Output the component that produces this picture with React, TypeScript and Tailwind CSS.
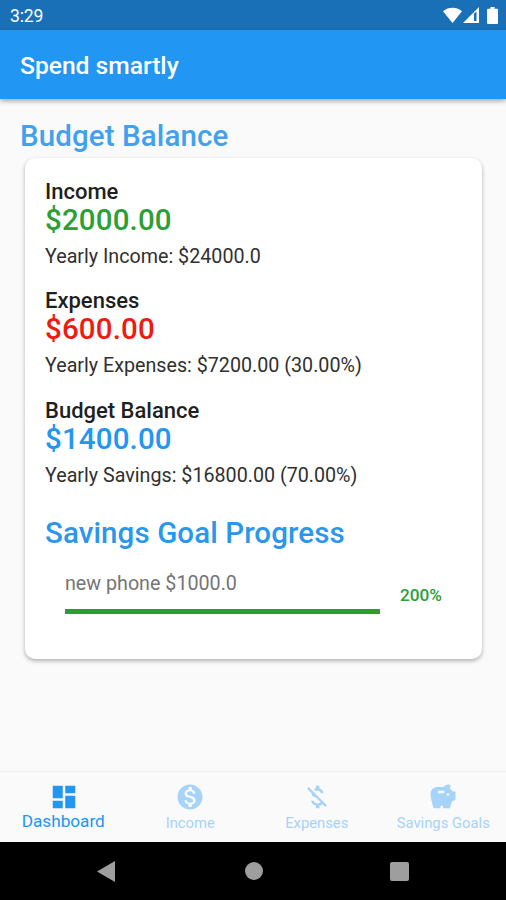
import {
  MdDashboard,
  MdMoneyOff,
  MdMonetizationOn,
  MdSavings,
} from "react-icons/md";

const summaries = [
  {
    title: "Income",
    amount: "$2000.00",
    yearly: "Yearly Income: $24000.0",
    color: "text-[#2ba036]",
  },
  {
    title: "Expenses",
    amount: "$600.00",
    yearly: "Yearly Expenses: $7200.00 (30.00%)",
    color: "text-[#f01a10]",
  },
  {
    title: "Budget Balance",
    amount: "$1400.00",
    yearly: "Yearly Savings: $16800.00 (70.00%)",
    color: "text-[#2196f3]",
  },
];

const tabs = [
  { label: "Income", Icon: MdMonetizationOn },
  { label: "Expenses", Icon: MdMoneyOff },
  { label: "Savings Goals", Icon: MdSavings },
];

const StatusBar = () => {
  return (
    <div className="h-[30px] shrink-0 bg-[#1a70b7] flex items-center justify-between pl-[10px] pr-[8px] text-white">
      <span className="text-[17.6px] leading-[30px] pt-[2px] tracking-[-0.2px]">
        3:29
      </span>
      <div className="flex items-center">
        <svg width="19" height="17" viewBox="0 0 19 17">
          <path d="M0 4.2C5.5-.4 13.5-.4 19 4.2L9.5 16z" fill="white" />
        </svg>
        <svg width="16" height="16" viewBox="0 0 16 16" className="ml-px">
          <path d="M16 0v16H0z" fill="white" />
          <path d="M11 6.5l2.5-2v9.5H11z" fill="#1a70b7" />
        </svg>
        <svg width="11" height="17" viewBox="0 0 11 17" className="ml-[8px]">
          <path
            d="M3.5 0h4v1.8H10a1 1 0 0 1 1 1V16a1 1 0 0 1-1 1H1a1 1 0 0 1-1-1V2.8a1 1 0 0 1 1-1h2.5z"
            fill="white"
          />
        </svg>
      </div>
    </div>
  );
};

const BudgetCard = () => {
  return (
    <div className="ml-[25px] mr-[24px] h-[501px] rounded-[10px] bg-white px-5 pt-[21.5px] shadow-[0_2px_4px_rgba(0,0,0,0.3)]">
      {summaries.map((item) => (
        <div key={item.title} className="h-[109.5px]">
          <p className="text-[22px] leading-[24px] font-medium text-[#1f1f1f]">
            {item.title}
          </p>
          <p
            className={`text-[29.5px] leading-[33px] font-medium tracking-[0.15px] ${item.color}`}
          >
            {item.amount}
          </p>
          <p className="pt-[8px] text-[19.7px] leading-[24px] text-[#303030]">
            {item.yearly}
          </p>
        </div>
      ))}
      <h2 className="pt-[8px] text-[29.5px] leading-[34px] font-medium tracking-[0.1px] text-[#2b97ec]">
        Savings Goal Progress
      </h2>
      <div className="flex items-center justify-between px-5 pt-[20.5px]">
        <div className="w-[315px]">
          <p className="text-[19.7px] leading-[26px] text-[#757575]">
            new phone $1000.0
          </p>
          <div className="mt-[12px] h-[5px] bg-[#27a02c]" />
        </div>
        <span className="pt-[5px] text-[17.2px] leading-[20px] font-medium text-[#2ba036]">
          200%
        </span>
      </div>
    </div>
  );
};

const BottomNav = () => {
  return (
    <div className="h-[71px] shrink-0 grid grid-cols-4 border-t border-[#efefef] bg-[#fafafa]">
      <div className="flex flex-col items-center pt-[10px] text-[#2196f3]">
        <MdDashboard size={30} className="ml-px" />
        <span className="text-[17.2px] leading-[19px]">Dashboard</span>
      </div>
      {tabs.map(({ label, Icon }) => (
        <div
          key={label}
          className="flex flex-col items-center pt-[10px] pl-px text-[#a6d3f8]"
        >
          <Icon size={30} />
          <span className="pt-px text-[14.8px] leading-[20px] whitespace-nowrap">
            {label}
          </span>
        </div>
      ))}
    </div>
  );
};

const SystemNav = () => {
  return (
    <div className="h-[58px] shrink-0 flex items-center bg-black text-[#9e9e9e]">
      <svg width="18" height="21" viewBox="0 0 18 21" className="ml-[97px]">
        <path d="M18 0v21L0 10.5z" fill="currentColor" />
      </svg>
      <div className="ml-[130px] size-[18px] rounded-full bg-[#9e9e9e]" />
      <div className="ml-[127px] size-[19px] rounded-[2px] bg-[#9e9e9e]" />
    </div>
  );
};

const App = () => {
  return (
    <div className="flex h-[900px] w-[506px] flex-col overflow-hidden bg-[#fafafa] font-[Roboto,sans-serif]">
      <StatusBar />
      <header className="z-10 h-[69px] shrink-0 bg-[#2196f3] px-5 shadow-[0_2px_5px_rgba(0,0,0,0.35)]">
        <h1 className="text-[24.6px] leading-[71px] font-medium text-white">
          Spend smartly
        </h1>
      </header>
      <main className="flex-1">
        <h2 className="pt-[20px] pl-5 pb-[5px] text-[29.5px] leading-[34px] font-medium tracking-[0.1px] text-[#42a1ee]">
          Budget Balance
        </h2>
        <BudgetCard />
      </main>
      <BottomNav />
      <SystemNav />
    </div>
  );
};

export default App;
